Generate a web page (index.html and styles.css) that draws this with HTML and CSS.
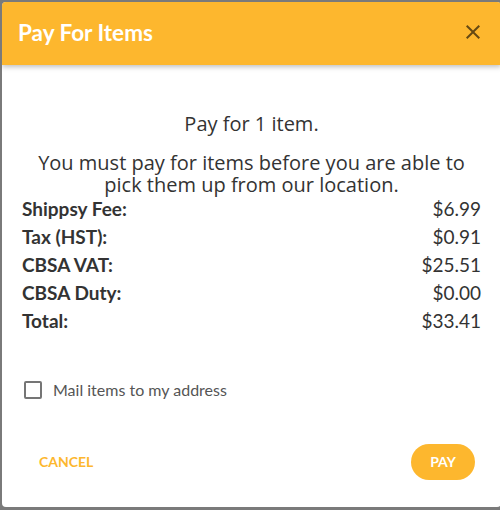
FILE: index.html
```html
<!DOCTYPE html>
<html>
<head>
<meta charset="utf-8">
<title>Pay For Items</title>
<link rel="stylesheet" href="styles.css">
</head>
<body>
<div class="dialog">
  <div class="dialog-header">
    <h2 class="dialog-title">Pay For Items</h2>
    <button class="close-btn" aria-label="close">
      <svg width="24" height="24" viewBox="0 0 24 24"><path d="M19 6.41 17.59 5 12 10.59 6.41 5 5 6.41 10.59 12 5 17.59 6.41 19 12 13.41 17.59 19 19 17.59 13.41 12z"/></svg>
    </button>
  </div>

  <div class="dialog-content">
    <p class="lead">Pay for 1 item.</p>
    <p class="notice">You must pay for items before you are able to pick them up from our location.</p>

    <div class="fees">
      <div class="fee-row"><span class="fee-label">Shippsy Fee:</span><span class="fee-value">$6.99</span></div>
      <div class="fee-row"><span class="fee-label">Tax (HST):</span><span class="fee-value">$0.91</span></div>
      <div class="fee-row"><span class="fee-label">CBSA VAT:</span><span class="fee-value">$25.51</span></div>
      <div class="fee-row"><span class="fee-label">CBSA Duty:</span><span class="fee-value">$0.00</span></div>
      <div class="fee-row"><span class="fee-label">Total:</span><span class="fee-value">$33.41</span></div>
    </div>

    <label class="mail-option">
      <span class="checkbox"></span>
      <span class="mail-text">Mail items to my address</span>
    </label>
  </div>

  <div class="dialog-actions">
    <button class="btn-cancel">CANCEL</button>
    <button class="btn-pay">PAY</button>
  </div>
</div>
</body>
</html>
```

FILE: styles.css
```css
html, body {
	margin: 0; padding: 0;
	height: 100%;
	overflow: hidden;
}
body {
	background: #7a7a7a;
	font-family: "Lato", "Liberation Sans", sans-serif;
	color: #333;
}

.dialog {
	margin: 2px 0 0 2px;
	width: 499px; height: 505px;
	background: #fff;
	border-radius: 4px;
	display: flex; flex-direction: column;
	overflow: hidden;
}

.dialog-header {
	height: 63px;
	flex: none;
	box-sizing: border-box;
	background: #fdb72e;
	display: flex; align-items: center; justify-content: space-between;
	padding: 0 4px 3px 16px;
	box-shadow: 0 2px 5px rgba(0,0,0,0.25);
	position: relative; z-index: 1;
}
.dialog-title {
	margin: 0;
	color: #fff;
	font-size: 22.5px; font-weight: 700;
}
.close-btn {
	background: none; border: none;
	padding: 12px; margin: 0;
	display: flex;
}
.close-btn svg { fill: rgba(0,0,0,0.6); }

.dialog-content {
	flex: 1;
	padding: 0 20px;
}
.lead {
	margin: 47px 0 0;
	text-align: center;
	font-family: "Open Sans", sans-serif;
	font-size: 20px;
	line-height: 24px;
}
.notice {
	max-width: 436px;
	margin: 16px auto 0;
	text-align: center;
	font-family: "Open Sans", sans-serif;
	font-size: 20px;
	line-height: 22px;
}

.fees { margin-top: -1px; }
.fee-row {
	display: flex; justify-content: space-between;
	font-size: 19px;
	line-height: 28px;
}
.fee-label { font-weight: 700; }

.mail-option {
	display: flex; align-items: center;
	margin-top: 45px;
	padding-left: 2px;
	font-size: 16px;
	color: #555;
}
.checkbox {
	width: 14px; height: 14px;
	border: 2px solid #757575;
	border-radius: 2px;
	margin-right: 11px;
}

.dialog-actions {
	flex: none;
	display: flex; justify-content: space-between; align-items: center;
	padding: 0 26px 27px 22px;
}
.btn-cancel, .btn-pay {
	font-family: "Lato", sans-serif;
	font-size: 14px; font-weight: 700;
	border: none; cursor: pointer;
	letter-spacing: 0;
}
.btn-cancel {
	background: none;
	color: #fdb72e;
	padding: 10px 15px;
}
.btn-pay {
	background: #fdb72e;
	color: #fff;
	height: 36px;
	padding: 0 19px;
	border-radius: 18px;
	min-width: 64px;
}
```
